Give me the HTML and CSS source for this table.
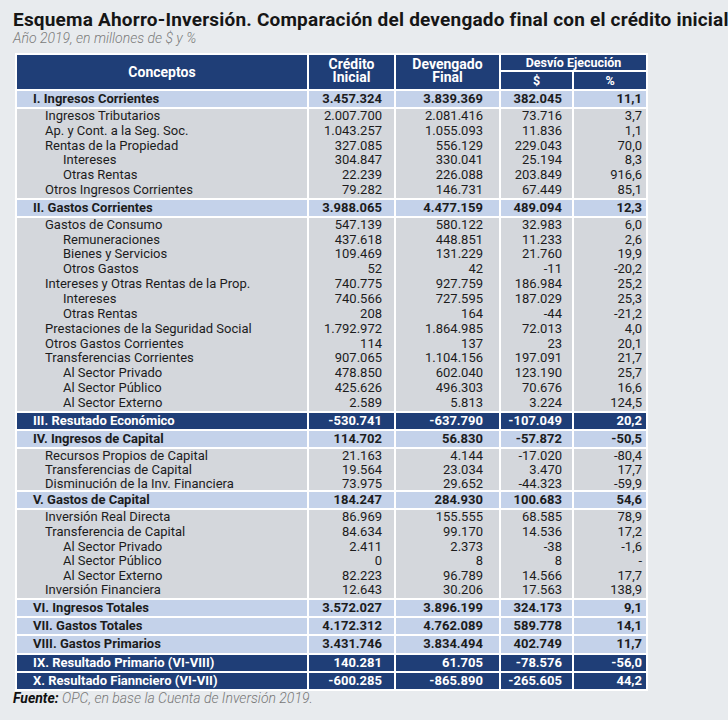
FILE: index.html
```html
<!DOCTYPE html>
<html lang="es">
<head>
<meta charset="utf-8">
<link rel="stylesheet" href="styles.css">
</head>
<body>
<div class="page">
  <h1 class="title">Esquema Ahorro-Inversión. Comparación del devengado final con el crédito inicial</h1>
  <p class="sub">Año 2019, en millones de $ y %</p>
  <table class="t">
    <colgroup>
      <col class="c1"><col class="c2"><col class="c3"><col class="c4"><col class="c5">
    </colgroup>
    <thead>
      <tr>
        <th rowspan="2" class="hcon">Conceptos</th>
        <th rowspan="2" class="h2l">Crédito<br>Inicial</th>
        <th rowspan="2" class="h2l">Devengado<br>Final</th>
        <th colspan="2" class="hdesv">Desvío Ejecución</th>
      </tr>
      <tr>
        <th class="hsub">$</th>
        <th class="hsub">%</th>
      </tr>
    </thead>
    <tbody class="g1">
      <tr class="band"><td>I. Ingresos Corrientes</td><td>3.457.324</td><td>3.839.369</td><td>382.045</td><td>11,1</td></tr>
      <tr class="r"><td class="l1">Ingresos Tributarios</td><td>2.007.700</td><td>2.081.416</td><td>73.716</td><td>3,7</td></tr>
      <tr class="r"><td class="l1">Ap. y Cont. a la Seg. Soc.</td><td>1.043.257</td><td>1.055.093</td><td>11.836</td><td>1,1</td></tr>
      <tr class="r"><td class="l1">Rentas de la Propiedad</td><td>327.085</td><td>556.129</td><td>229.043</td><td>70,0</td></tr>
      <tr class="r"><td class="l2">Intereses</td><td>304.847</td><td>330.041</td><td>25.194</td><td>8,3</td></tr>
      <tr class="r"><td class="l2">Otras Rentas</td><td>22.239</td><td>226.088</td><td>203.849</td><td>916,6</td></tr>
      <tr class="r"><td class="l1">Otros Ingresos Corrientes</td><td>79.282</td><td>146.731</td><td>67.449</td><td>85,1</td></tr>
    </tbody>
    <tbody class="g2">
      <tr class="band"><td>II. Gastos Corrientes</td><td>3.988.065</td><td>4.477.159</td><td>489.094</td><td>12,3</td></tr>
      <tr class="r"><td class="l1">Gastos de Consumo</td><td>547.139</td><td>580.122</td><td>32.983</td><td>6,0</td></tr>
      <tr class="r"><td class="l2">Remuneraciones</td><td>437.618</td><td>448.851</td><td>11.233</td><td>2,6</td></tr>
      <tr class="r"><td class="l2">Bienes y Servicios</td><td>109.469</td><td>131.229</td><td>21.760</td><td>19,9</td></tr>
      <tr class="r"><td class="l2">Otros Gastos</td><td>52</td><td>42</td><td>-11</td><td>-20,2</td></tr>
      <tr class="r"><td class="l1">Intereses y Otras Rentas de la Prop.</td><td>740.775</td><td>927.759</td><td>186.984</td><td>25,2</td></tr>
      <tr class="r"><td class="l2">Intereses</td><td>740.566</td><td>727.595</td><td>187.029</td><td>25,3</td></tr>
      <tr class="r"><td class="l2">Otras Rentas</td><td>208</td><td>164</td><td>-44</td><td>-21,2</td></tr>
      <tr class="r"><td class="l1">Prestaciones de la Seguridad Social</td><td>1.792.972</td><td>1.864.985</td><td>72.013</td><td>4,0</td></tr>
      <tr class="r"><td class="l1">Otros Gastos Corrientes</td><td>114</td><td>137</td><td>23</td><td>20,1</td></tr>
      <tr class="r"><td class="l1">Transferencias Corrientes</td><td>907.065</td><td>1.104.156</td><td>197.091</td><td>21,7</td></tr>
      <tr class="r"><td class="l2">Al Sector Privado</td><td>478.850</td><td>602.040</td><td>123.190</td><td>25,7</td></tr>
      <tr class="r"><td class="l2">Al Sector Público</td><td>425.626</td><td>496.303</td><td>70.676</td><td>16,6</td></tr>
      <tr class="r"><td class="l2">Al Sector Externo</td><td>2.589</td><td>5.813</td><td>3.224</td><td>124,5</td></tr>
    </tbody>
    <tbody class="g3">
      <tr class="dark"><td>III. Resutado Económico</td><td>-530.741</td><td>-637.790</td><td>-107.049</td><td>20,2</td></tr>
    </tbody>
    <tbody class="g4">
      <tr class="band"><td>IV. Ingresos de Capital</td><td>114.702</td><td>56.830</td><td>-57.872</td><td>-50,5</td></tr>
      <tr class="r"><td class="l1">Recursos Propios de Capital</td><td>21.163</td><td>4.144</td><td>-17.020</td><td>-80,4</td></tr>
      <tr class="r"><td class="l1">Transferencias de Capital</td><td>19.564</td><td>23.034</td><td>3.470</td><td>17,7</td></tr>
      <tr class="r"><td class="l1">Disminución de la Inv. Financiera</td><td>73.975</td><td>29.652</td><td>-44.323</td><td>-59,9</td></tr>
    </tbody>
    <tbody class="g5">
      <tr class="band"><td>V. Gastos de Capital</td><td>184.247</td><td>284.930</td><td>100.683</td><td>54,6</td></tr>
      <tr class="r"><td class="l1">Inversión Real Directa</td><td>86.969</td><td>155.555</td><td>68.585</td><td>78,9</td></tr>
      <tr class="r"><td class="l1">Transferencia de Capital</td><td>84.634</td><td>99.170</td><td>14.536</td><td>17,2</td></tr>
      <tr class="r"><td class="l2">Al Sector Privado</td><td>2.411</td><td>2.373</td><td>-38</td><td>-1,6</td></tr>
      <tr class="r"><td class="l2">Al Sector Público</td><td>0</td><td>8</td><td>8</td><td>-</td></tr>
      <tr class="r"><td class="l2">Al Sector Externo</td><td>82.223</td><td>96.789</td><td>14.566</td><td>17,7</td></tr>
      <tr class="r"><td class="l1">Inversión Financiera</td><td>12.643</td><td>30.206</td><td>17.563</td><td>138,9</td></tr>
    </tbody>
    <tbody class="g6">
      <tr class="band"><td>VI. Ingresos Totales</td><td>3.572.027</td><td>3.896.199</td><td>324.173</td><td>9,1</td></tr>
      <tr class="band"><td>VII. Gastos Totales</td><td>4.172.312</td><td>4.762.089</td><td>589.778</td><td>14,1</td></tr>
      <tr class="band"><td>VIII. Gastos Primarios</td><td>3.431.746</td><td>3.834.494</td><td>402.749</td><td>11,7</td></tr>
      <tr class="dark"><td>IX. Resultado Primario (VI-VIII)</td><td>140.281</td><td>61.705</td><td>-78.576</td><td>-56,0</td></tr>
      <tr class="dark"><td>X. Resultado Fiannciero (VI-VII)</td><td>-600.285</td><td>-865.890</td><td>-265.605</td><td>44,2</td></tr>
    </tbody>
  </table>
  <p class="src"><b>Fuente:</b> OPC, en base la Cuenta de Inversión 2019.</p>
</div>
</body>
</html>
```

FILE: styles.css
```css
html, body {
  margin: 0;
  background: #e8ebee;
}
body {
  font-family: Roboto, "Noto Sans", sans-serif;
  color: #1c1c1c;
}
.page {
  padding: 10px 0 0 13px;
}
.title {
  margin: 0;
  font-size: 19px;
  line-height: 20px;
  letter-spacing: 0.2px;
  font-weight: 700;
  color: #161616;
  white-space: nowrap;
}
.sub {
  margin: 0;
  font-size: 14px;
  line-height: 16px;
  font-style: italic;
  font-weight: 300;
  color: #7b7b7b;
}
.t {
  margin: 7px 0 0 2px;
  border-collapse: collapse;
  table-layout: fixed;
  width: 631px;
  font-size: 13px;
}
.c1 { width: 292px; }
.c2 { width: 87px; }
.c3 { width: 105px; }
.c4 { width: 73px; }
.c5 { width: 74px; }

th, td {
  border: 2px solid #fff;
  padding: 0;
}
th {
  background: #1f3e77;
  color: #fff;
  font-weight: 700;
  text-align: center;
}
.hcon {
  font-size: 14px;
  padding-bottom: 1px;
}
.h2l {
  font-size: 14px;
  line-height: 13px;
  padding-bottom: 2px;
}
.hdesv {
  font-size: 12.5px;
  line-height: 15px;
  height: 15px;
}
.hsub {
  font-size: 12.5px;
  line-height: 17px;
  height: 17px;
}
td {
  text-align: right;
}
td:first-child {
  text-align: left;
}
td:nth-child(2) { padding-right: 12px; }
td:nth-child(3) { padding-right: 16px; }
td:nth-child(4) { padding-right: 10px; }
td:nth-child(5) { padding-right: 4px; }

.band td {
  background: #c4d2ea;
  font-weight: 700;
  line-height: 16px;
  height: 16px;
}
.band td:first-child,
.dark td:first-child {
  padding-left: 16px;
}
.dark td {
  background: #1f3e77;
  color: #fff;
  font-weight: 700;
  line-height: 16px;
  height: 16px;
}
.g6 .band td,
.g6 .dark td {
  line-height: 16.3px;
  height: 16.3px;
}
.r td {
  background: #d4d7dc;
  border-top: none;
  border-bottom: none;
}
.g1 .r td { line-height: 14.8px; }
.g2 .r td { line-height: 14.85px; }
.g4 .r td { line-height: 13.9px; }
.g5 .r td { line-height: 14.55px; }
.l1 { padding-left: 28px; }
.l2 { padding-left: 46px; }

.src {
  margin: -1px 0 0 0;
  font-size: 14px;
  line-height: 16px;
  font-style: italic;
  font-weight: 300;
  color: #777;
}
.src b {
  font-weight: 700;
  color: #111;
}
```
